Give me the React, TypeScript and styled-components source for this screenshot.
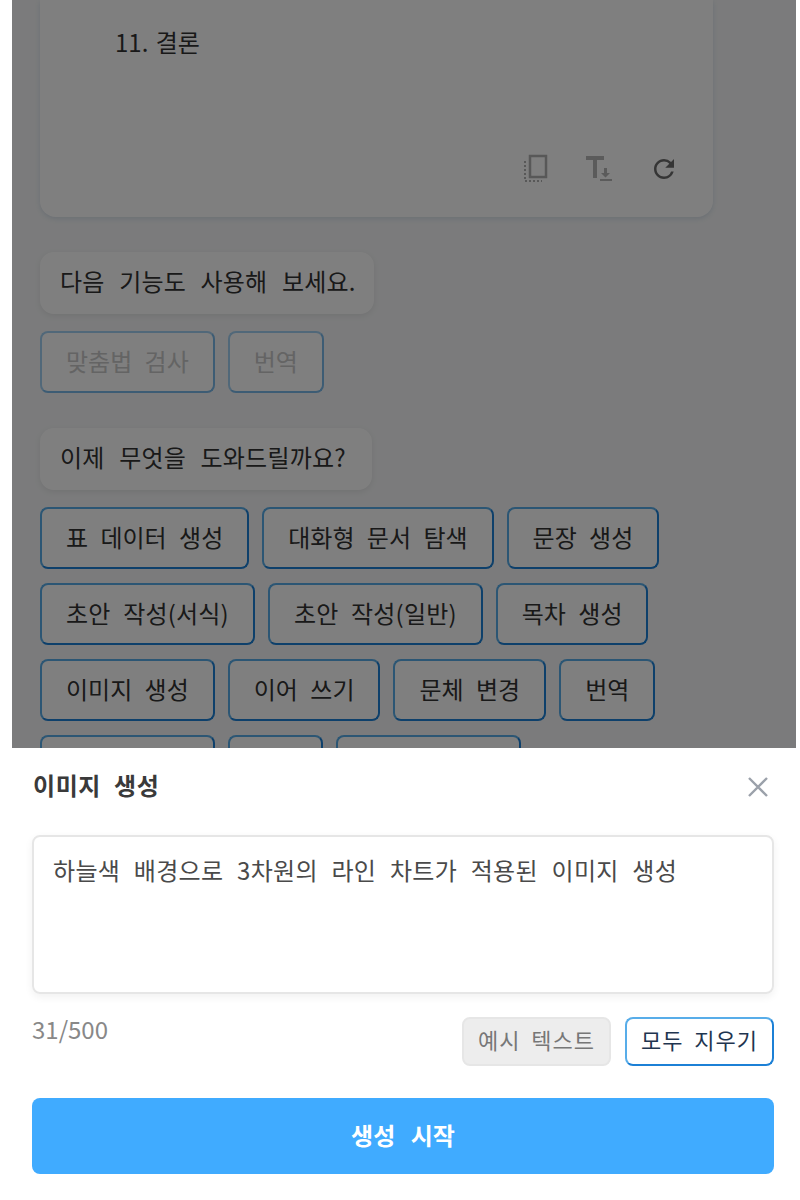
import { createGlobalStyle } from 'styled-components'
import styled from 'styled-components'
import { MdRefresh } from 'react-icons/md'

const GlobalStyle = createGlobalStyle`
  html, body {
    margin: 0;
    padding: 0;
    background: #fff;
  }
  body {
    font-family: "Noto Sans CJK KR", "Noto Sans", sans-serif;
    color: #333;
  }
  * {
    box-sizing: border-box;
  }
`

const Page = styled.div`
  width: 800px;
  height: 1200px;
  display: flex;
  flex-direction: column;
  overflow: hidden;
`

const ChatArea = styled.div`
  position: relative;
  height: 748px;
  flex: none;
  margin: 0 4px 0 12px;
  padding: 0 28px;
  background: #f6f7f8;
  overflow: hidden;
  display: flex;
  flex-direction: column;
  align-items: flex-start;
`

const Dim = styled.div`
  position: absolute;
  inset: 0;
  background: rgba(0, 0, 0, 0.5);
`

const AnswerCard = styled.div`
  width: 673px;
  height: 217px;
  flex: none;
  padding: 24px 34px 0 75px;
  background: #fff;
  border-radius: 0 0 16px 16px;
  box-shadow: 0 2px 5px rgba(60, 110, 160, 0.16);
  display: flex;
  flex-direction: column;
  font-size: 24px;
  line-height: 36px;
  word-spacing: 2px;
`

const CardTools = styled.div`
  margin-top: auto;
  margin-bottom: 33px;
  align-self: flex-end;
  display: flex;
  align-items: center;
  gap: 36px;
`

const Bubble = styled.div`
  flex: none;
  margin-top: 35px;
  height: 62px;
  min-width: 332px;
  padding: 0 18px 5px 20px;
  display: flex;
  align-items: center;
  background: #fff;
  border-radius: 14px;
  box-shadow: 0 2px 6px rgba(0, 0, 0, 0.08);
  font-size: 24px;
  letter-spacing: 0.2px;
  word-spacing: 9px;
  white-space: nowrap;
`

const ChipRow = styled.div`
  flex: none;
  margin-top: 17px;
  display: flex;
  flex-wrap: wrap;
  gap: 14px 13px;
  width: 700px;
`

const Chip = styled.button<{ $disabled?: boolean; $spread?: boolean; $width?: number }>`
  height: 62px;
  width: ${p => (p.$width ? `${p.$width}px` : 'auto')};
  padding: 0 24px 3px;
  background: #fff;
  border: 2px solid;
  border-color: ${p =>
    p.$disabled
      ? '#a3d0f2 #7ab8e8 #7ab8e8 #a3d0f2'
      : '#58ade9 #1c80d6 #1c80d6 #58ade9'};
  border-radius: 8px;
  font: inherit;
  font-size: 24px;
  letter-spacing: ${p => (p.$spread ? '0.2px' : '0')};
  word-spacing: 7px;
  color: ${p => (p.$disabled ? '#c8c8c8' : '#333')};
  white-space: nowrap;
`

const Sheet = styled.div`
  flex: 1;
  background: #fff;
  padding: 18px 26px 0 32px;
  display: flex;
  flex-direction: column;
`

const SheetHeader = styled.div`
  height: 40px;
  display: flex;
  align-items: center;
  justify-content: space-between;
  padding-right: 4px;
`

const SheetTitle = styled.div`
  margin: 0 0 4px 1px;
  font-size: 24px;
  font-weight: 700;
  letter-spacing: 0.6px;
  word-spacing: 7px;
  color: #3a3a3a;
`

const CloseIcon = styled.svg`
  width: 24px;
  height: 24px;
  margin-top: 2px;
  color: #9ba1aa;
`

const PromptBox = styled.div`
  flex: none;
  margin-top: 29px;
  height: 159px;
  padding: 15px 19px;
  border: 2px solid #e6e6e6;
  border-radius: 8px;
  box-shadow: 0 3px 8px rgba(0, 0, 0, 0.06);
  font-size: 24px;
  line-height: 36px;
  letter-spacing: 0.3px;
  word-spacing: 8px;
  color: #4a4a4a;
`

const BelowPrompt = styled.div`
  flex: none;
  margin-top: 23px;
  display: flex;
  justify-content: space-between;
  align-items: flex-start;
`

const Counter = styled.div`
  font-size: 24px;
  line-height: 24px;
  color: #888;
`

const SmallButtons = styled.div`
  display: flex;
  gap: 14px;
`

const SmallButton = styled.button<{ $outlined?: boolean }>`
  width: 149px;
  height: 49px;
  padding: 0 0 5px;
  background: ${p => (p.$outlined ? '#fff' : '#ededed')};
  border: 2px solid;
  border-color: ${p => (p.$outlined ? '#58ade9 #1c80d6 #1c80d6 #58ade9' : '#e6e6e6')};
  border-radius: 8px;
  font: inherit;
  font-size: 22px;
  letter-spacing: 1px;
  word-spacing: 5px;
  color: ${p => (p.$outlined ? '#1f3550' : '#777')};
`

const StartButton = styled.button`
  flex: none;
  margin-top: 32px;
  height: 76px;
  padding: 0 0 4px;
  background: #40abff;
  border: 0;
  border-radius: 8px;
  font: inherit;
  font-size: 24px;
  font-weight: 700;
  word-spacing: 10px;
  color: #fff;
`

const CopyIcon = () => (
  <svg width="26" height="30" viewBox="0 0 26 30" fill="none" stroke="#b0b0b0">
    <rect x="7" y="2" width="16" height="21" strokeWidth="2.500" />
    <path d="M2 7v20h17" strokeWidth="2" strokeDasharray="2 2" />
  </svg>
)

const TextDownIcon = () => (
  <svg width="28" height="28" viewBox="0 0 28 28" fill="#b6b6b6">
    <path d="M1 1h18v4h-7v18H8V5H1z" />
    <path d="M19 13h3v5h3l-4.500 4.500L16 18h3z" />
    <rect x="15" y="24" width="12" height="2" />
  </svg>
)

const firstChips = ['맞춤법 검사', '번역']

const chips = [
  '표 데이터 생성',
  '대화형 문서 탐색',
  '문장 생성',
  '초안 작성(서식)',
  '초안 작성(일반)',
  '목차 생성',
  '이미지 생성',
  '이어 쓰기',
  '문체 변경',
  '번역',
]

// the last row is cut by the sheet, only its top edge shows
const cutChipWidths = [175, 95, 185]

export default function App() {
  return (
    <Page>
      <GlobalStyle />
      <ChatArea>
        <AnswerCard>
          <div>11. 결론</div>
          <CardTools>
            <CopyIcon />
            <TextDownIcon />
            <MdRefresh size={30} color="#6a6a6a" />
          </CardTools>
        </AnswerCard>
        <Bubble>다음 기능도 사용해 보세요.</Bubble>
        <ChipRow>
          {firstChips.map(label => (
            <Chip key={label} $disabled>{label}</Chip>
          ))}
        </ChipRow>
        <Bubble>이제 무엇을 도와드릴까요?</Bubble>
        <ChipRow>
          {chips.map(label => (
            <Chip key={label} $spread={label.includes('(')}>{label}</Chip>
          ))}
          {cutChipWidths.map(width => (
            <Chip key={width} $width={width} />
          ))}
        </ChipRow>
        <Dim />
      </ChatArea>
      <Sheet>
        <SheetHeader>
          <SheetTitle>이미지 생성</SheetTitle>
          <CloseIcon viewBox="0 0 24 24" fill="none" stroke="currentColor" strokeWidth="2.4">
            <path d="M3 3l18 18M21 3L3 21" />
          </CloseIcon>
        </SheetHeader>
        <PromptBox>하늘색 배경으로 3차원의 라인 차트가 적용된 이미지 생성</PromptBox>
        <BelowPrompt>
          <Counter>31/500</Counter>
          <SmallButtons>
            <SmallButton>예시 텍스트</SmallButton>
            <SmallButton $outlined>모두 지우기</SmallButton>
          </SmallButtons>
        </BelowPrompt>
        <StartButton>생성 시작</StartButton>
      </Sheet>
    </Page>
  )
}
